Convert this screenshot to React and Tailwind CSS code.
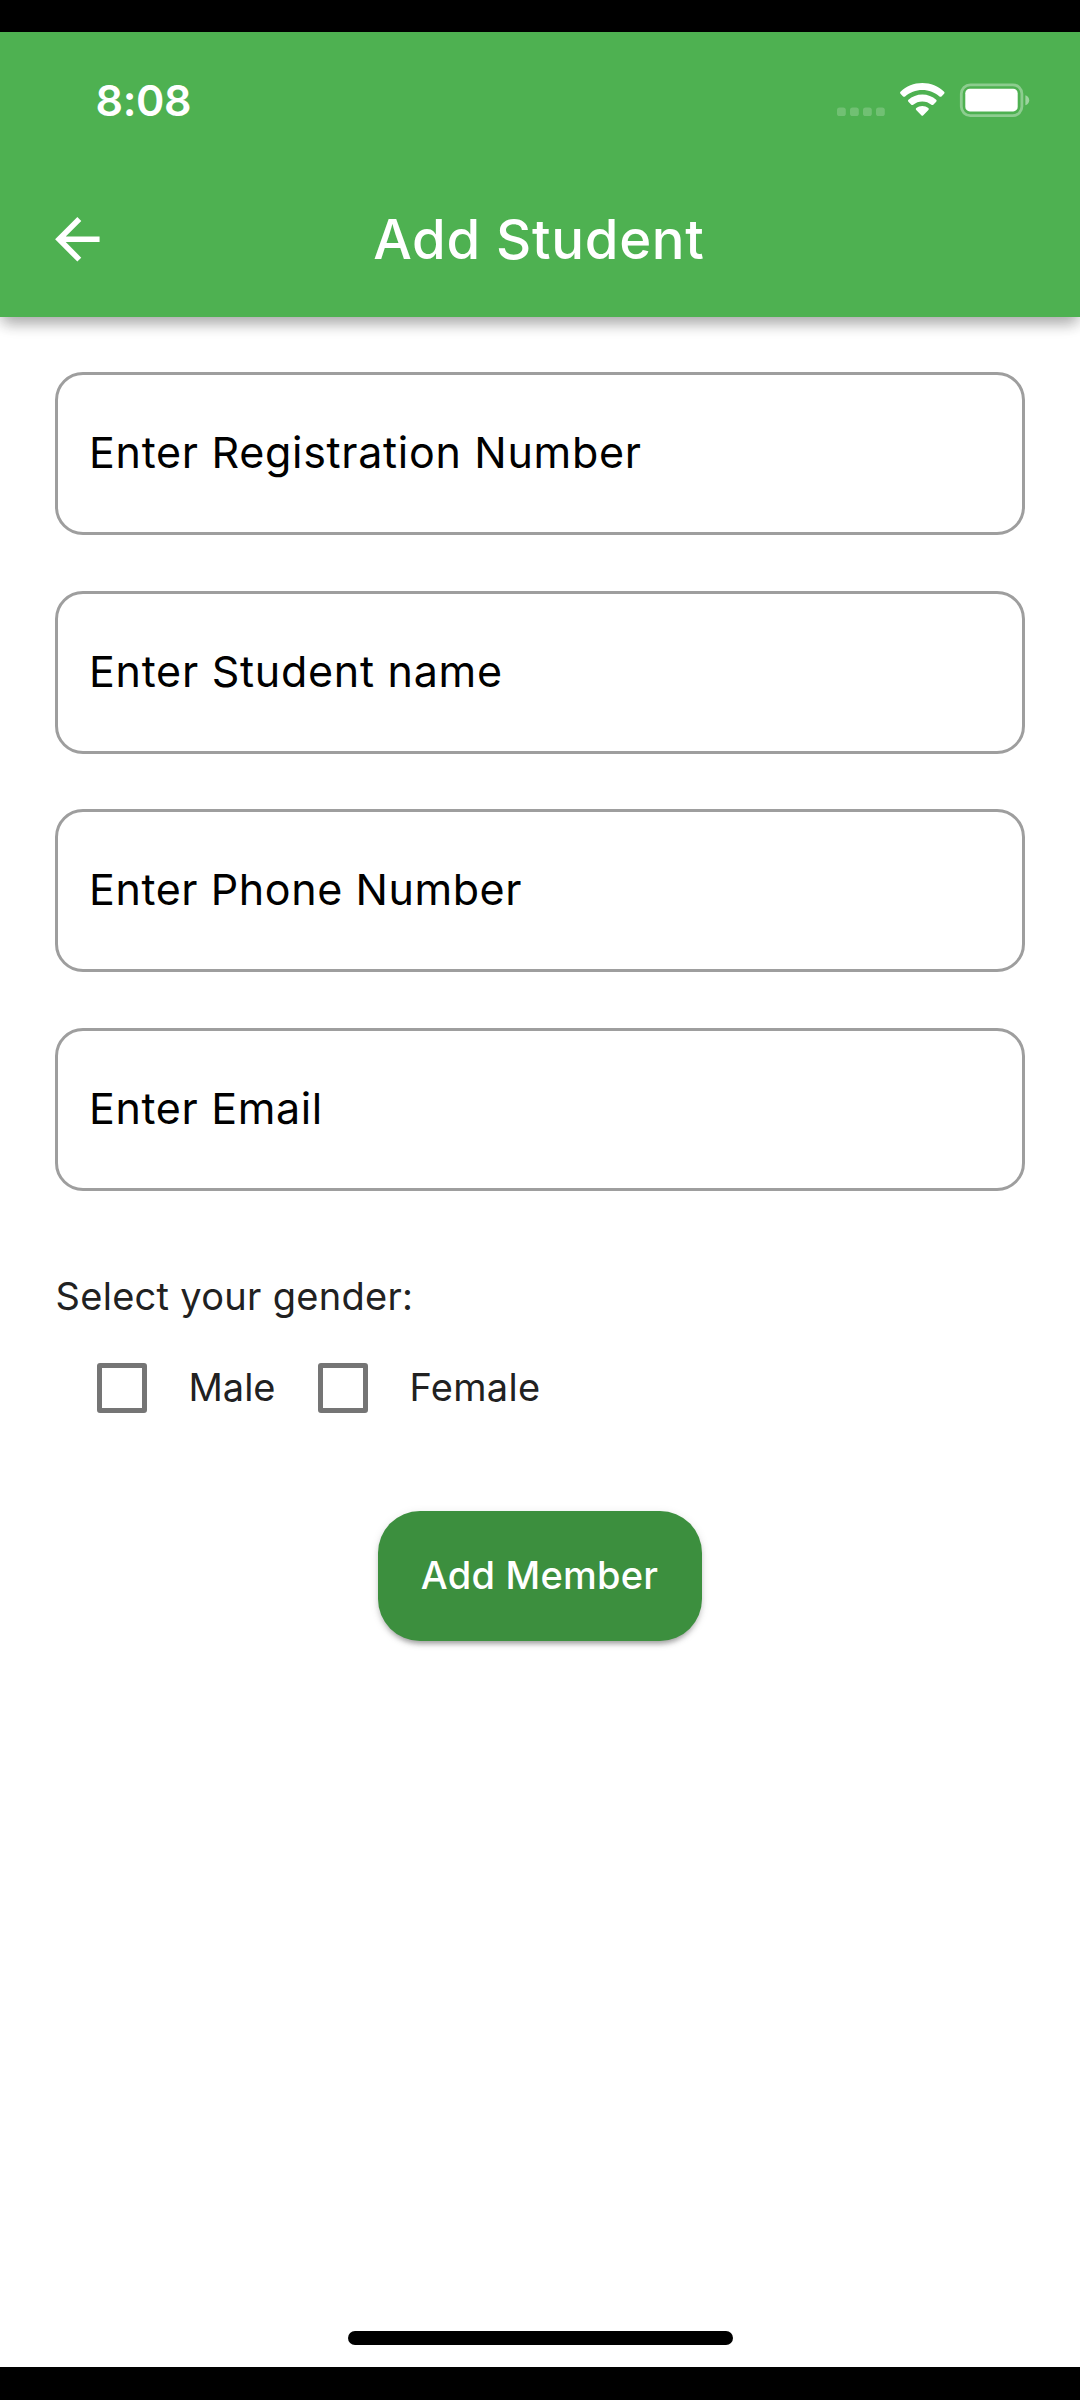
const fields = [
  { label: "Enter Registration Number", spacing: "tracking-[0.7px]" },
  { label: "Enter Student name", spacing: "tracking-[0.73px]" },
  { label: "Enter Phone Number", spacing: "tracking-[0.58px]" },
  { label: "Enter Email", spacing: "tracking-[0.65px]" },
];

function StatusIcons() {
  return (
    <svg width="196" height="40" viewBox="834 80 196 40" className="block" fill="#fff">
      <g fillOpacity="0.2">
        <rect x="837" y="107.5" width="8.8" height="8.6" rx="2.6" />
        <rect x="850" y="107.5" width="8.8" height="8.6" rx="2.6" />
        <rect x="863" y="107.5" width="8.8" height="8.6" rx="2.6" />
        <rect x="876" y="107.5" width="8.8" height="8.6" rx="2.6" />
      </g>
      {/* wifi */}
      <path d="M922.3 83C913.9 83 906.2 86.3 900.5 91.7Q899.5 92.7 900.5 93.7L903.1 96.4Q904.1 97.3 905.1 96.4C909.7 92.3 915.7 89.9 922.3 89.9C928.9 89.9 934.9 92.3 939.5 96.4Q940.5 97.3 941.5 96.4L944.1 93.7Q945.1 92.7 944.1 91.7C938.4 86.3 930.7 83 922.3 83Z" />
      <path d="M922.3 94.4C917 94.4 912.1 96.4 908.4 99.8Q907.4 100.8 908.4 101.8L911.3 104.7Q912.2 105.5 913.2 104.7C915.7 102.6 918.8 101.4 922.3 101.4C925.8 101.4 928.9 102.6 931.4 104.7Q932.4 105.5 933.3 104.7L936.2 101.8Q937.2 100.8 936.2 99.8C932.5 96.4 927.6 94.4 922.3 94.4Z" />
      <path d="M922.3 106C920 106 917.9 106.7 916.3 108Q915.2 108.9 916.2 109.9L921.3 115.2Q922.3 116.2 923.3 115.2L928.4 109.9Q929.4 108.9 928.3 108C926.7 106.7 924.6 106 922.3 106Z" />
      {/* battery */}
      <rect x="961.3" y="84.8" width="60.6" height="30.8" rx="9" fill="none" stroke="#fff" strokeOpacity="0.36" strokeWidth="2.8" />
      <rect x="965.3" y="88.8" width="52.4" height="22.6" rx="4.5" />
      <path d="M1025.4 95.3C1030.5 97 1030.5 103.6 1025.4 105.3Z" fillOpacity="0.45" />
    </svg>
  );
}

function Field({ label, spacing }) {
  return (
    <div className="h-[163px] shrink-0 rounded-[28px] border-3 border-[#9e9e9e] pt-[51px] pl-[31px]">
      <span className={`block text-[43px] leading-[52px] whitespace-nowrap text-black ${spacing}`}>{label}</span>
    </div>
  );
}

function CheckOption({ label, spacing, width }) {
  return (
    <div className={`flex ${width}`}>
      <div className="size-[50px] shrink-0 rounded-[3px] border-[5px] border-[#757575]" />
      <span className={`mt-px ml-[41.5px] text-[38px] leading-[46px] text-[#212121] ${spacing}`}>{label}</span>
    </div>
  );
}

export default function App() {
  return (
    <div className="flex h-[2400px] w-[1080px] flex-col overflow-hidden bg-black pt-8 pb-[33px] font-['Inter',sans-serif]">
      <div className="flex flex-1 flex-col overflow-hidden bg-white">
        <header className="h-[285px] shrink-0 bg-[#4eb151] shadow-[0_11px_14px_-4px_rgba(0,0,0,0.2),0_5px_14px_0_rgba(0,0,0,0.14),0_2px_20px_0_rgba(0,0,0,0.07)]">
          <div className="flex h-[142px] items-start justify-between pt-[42px] pr-[50px] pl-[95.5px]">
            <span className="text-[43px] leading-[52px] font-semibold tracking-[-0.37px] text-white">8:08</span>
            <div className="mt-[6px]">
              <StatusIcons />
            </div>
          </div>
          <div className="flex items-start pl-[44px]">
            <svg width="66.7" height="66.7" viewBox="0 0 24 24" fill="#fff" className="mt-[32px] shrink-0">
              <path d="M20 11H7.83l5.59-5.59L12 4l-8 8 8 8 1.41-1.41L7.83 13H20v-2z" />
            </svg>
            <h1 className="mt-[33px] ml-[262.5px] text-[54.5px] leading-[65px] font-medium tracking-[0.7px] whitespace-nowrap text-white">
              Add Student
            </h1>
          </div>
        </header>

        <main className="flex flex-1 flex-col px-[55px] pt-[55.2px]">
          <div className="flex flex-col gap-[55.6px]">
            {fields.map((f) => (
              <Field key={f.label} {...f} />
            ))}
          </div>

          <p className="mt-[82px] ml-[0.5px] text-[38px] leading-[46px] tracking-[0.3px] text-[#212121]">Select your gender:</p>

          <div className="mt-[44px] ml-[42px] flex">
            <CheckOption label="Male" spacing="tracking-normal" width="w-[221px]" />
            <CheckOption label="Female" spacing="tracking-[0.3px]" width="w-[240px]" />
          </div>

          <button className="mt-[98px] h-[130px] w-[324px] self-center rounded-[42px] bg-[#3c8f3e] pr-[1px] pb-[2px] text-[38px] leading-[46px] font-medium tracking-[0.24px] whitespace-nowrap text-white shadow-[0_7px_4px_-5px_rgba(0,0,0,0.2),0_4px_5px_0_rgba(0,0,0,0.14),0_2px_10px_0_rgba(0,0,0,0.1)]">
            Add Member
          </button>

          <div className="mt-auto mb-[22px] h-[14px] w-[385px] self-center rounded-full bg-black" />
        </main>
      </div>
    </div>
  );
}
